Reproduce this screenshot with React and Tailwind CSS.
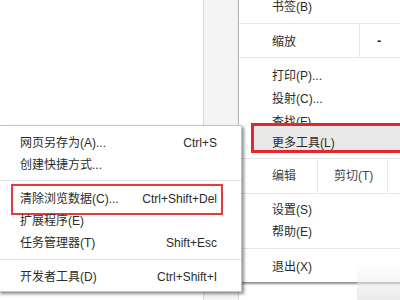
import React from "react";

const font = { fontFamily: '"Liberation Sans", "Noto Sans CJK SC", sans-serif' };

function SubRow({ label, shortcut, children }) {
  return (
    <div className="relative flex h-[22px] items-center justify-between pl-[21px] pr-[24px]">
      {children}
      <span className="relative">{label}</span>
      {shortcut && <span className="relative">{shortcut}</span>}
    </div>
  );
}

function MainRow({ label }) {
  return (
    <div className="flex h-[23px] items-center pl-[33px]">
      <span>{label}</span>
    </div>
  );
}

export default function App() {
  return (
    <div
      className="relative h-[300px] w-[400px] overflow-hidden bg-white text-[12px] text-[#2b2b2b]"
      style={font}
    >
      {/* page background */}
      <div className="flex h-full">
        <div className="w-[203px] bg-white" />
        <div className="w-[36px] border-x border-[#d9d9d9] bg-[#f4f4f4]" />
        <div className="flex-1 bg-white" />
      </div>

      {/* main menu */}
      <div className="absolute left-[239px] top-[-10px] w-[200px] bg-white pt-[6px] shadow-[0_2px_2px_rgba(0,0,0,0.45)]">
        <div className="flex h-[22px] items-center pl-[33px]">书签(B)</div>
        <div className="mt-[5px] flex h-[35px] border-y border-[#e6e6e6]">
          <div className="flex w-[121px] items-center border-r border-[#e6e6e6] pl-[33px] pt-[2px]">
            缩放
          </div>
          <div className="flex items-center pl-[17px] pt-[1px] text-[13px] font-bold">
            -
          </div>
        </div>
        <div className="pb-[2px] pt-[6px]">
          <MainRow label="打印(P)..." />
          <MainRow label="投射(C)..." />
          <MainRow label="查找(F)..." />
          <div className="relative flex h-[23px] items-center pl-[33px]">
            <div className="absolute bottom-[3px] left-[12px] right-[-20px] top-[-10px] border-[3px] border-[#e5272d] bg-[#e9e9e9]" />
            <span className="relative pb-[3px]">更多工具(L)</span>
          </div>
        </div>
        <div className="flex h-[36px] border-y border-[#e6e6e6] text-[#444]">
          <div className="flex w-[79px] items-center border-r border-[#e6e6e6] pl-[33px]">
            编辑
          </div>
          <div className="flex w-[70px] items-center border-r border-[#e6e6e6] pl-[16px]">
            剪切(T)
          </div>
          <div className="flex-1" />
        </div>
        <div className="pb-[5px] pt-[5px]">
          <div className="flex h-[22px] items-center pl-[33px]">设置(S)</div>
          <div className="flex h-[22px] items-center pl-[33px]">帮助(E)</div>
        </div>
        <div className="border-t border-[#e6e6e6] pb-[4px] pt-[7px]">
          <div className="flex h-[22px] items-center pl-[33px]">退出(X)</div>
        </div>
      </div>

      {/* faint watermark shade bottom right */}
      <div className="absolute bottom-0 left-[357px] right-0 top-[263px] bg-gradient-to-b from-white/0 to-[#ebebeb]" />

      {/* submenu */}
      <div className="absolute left-[-2px] top-[125px] w-[244px] border border-[#c4c4c4] bg-white shadow-[2px_2px_3px_rgba(0,0,0,0.45)]">
        <div className="pb-[4px] pt-[6px]">
          <SubRow label="网页另存为(A)..." shortcut="Ctrl+S" />
          <SubRow label="创建快捷方式..." />
        </div>
        <div className="border-t border-[#e3e3e3] pb-[5px] pt-[7px]">
          <SubRow label="清除浏览数据(C)..." shortcut="Ctrl+Shift+Del">
            <div className="absolute bottom-[-5px] left-[12px] right-[18px] top-[-4px] border-2 border-[#e53a3a]" />
          </SubRow>
          <SubRow label="扩展程序(E)" />
          <SubRow label="任务管理器(T)" shortcut="Shift+Esc" />
        </div>
        <div className="border-t border-[#e3e3e3] pb-[3px] pt-[6px]">
          <SubRow label="开发者工具(D)" shortcut="Ctrl+Shift+I" />
        </div>
      </div>
    </div>
  );
}
